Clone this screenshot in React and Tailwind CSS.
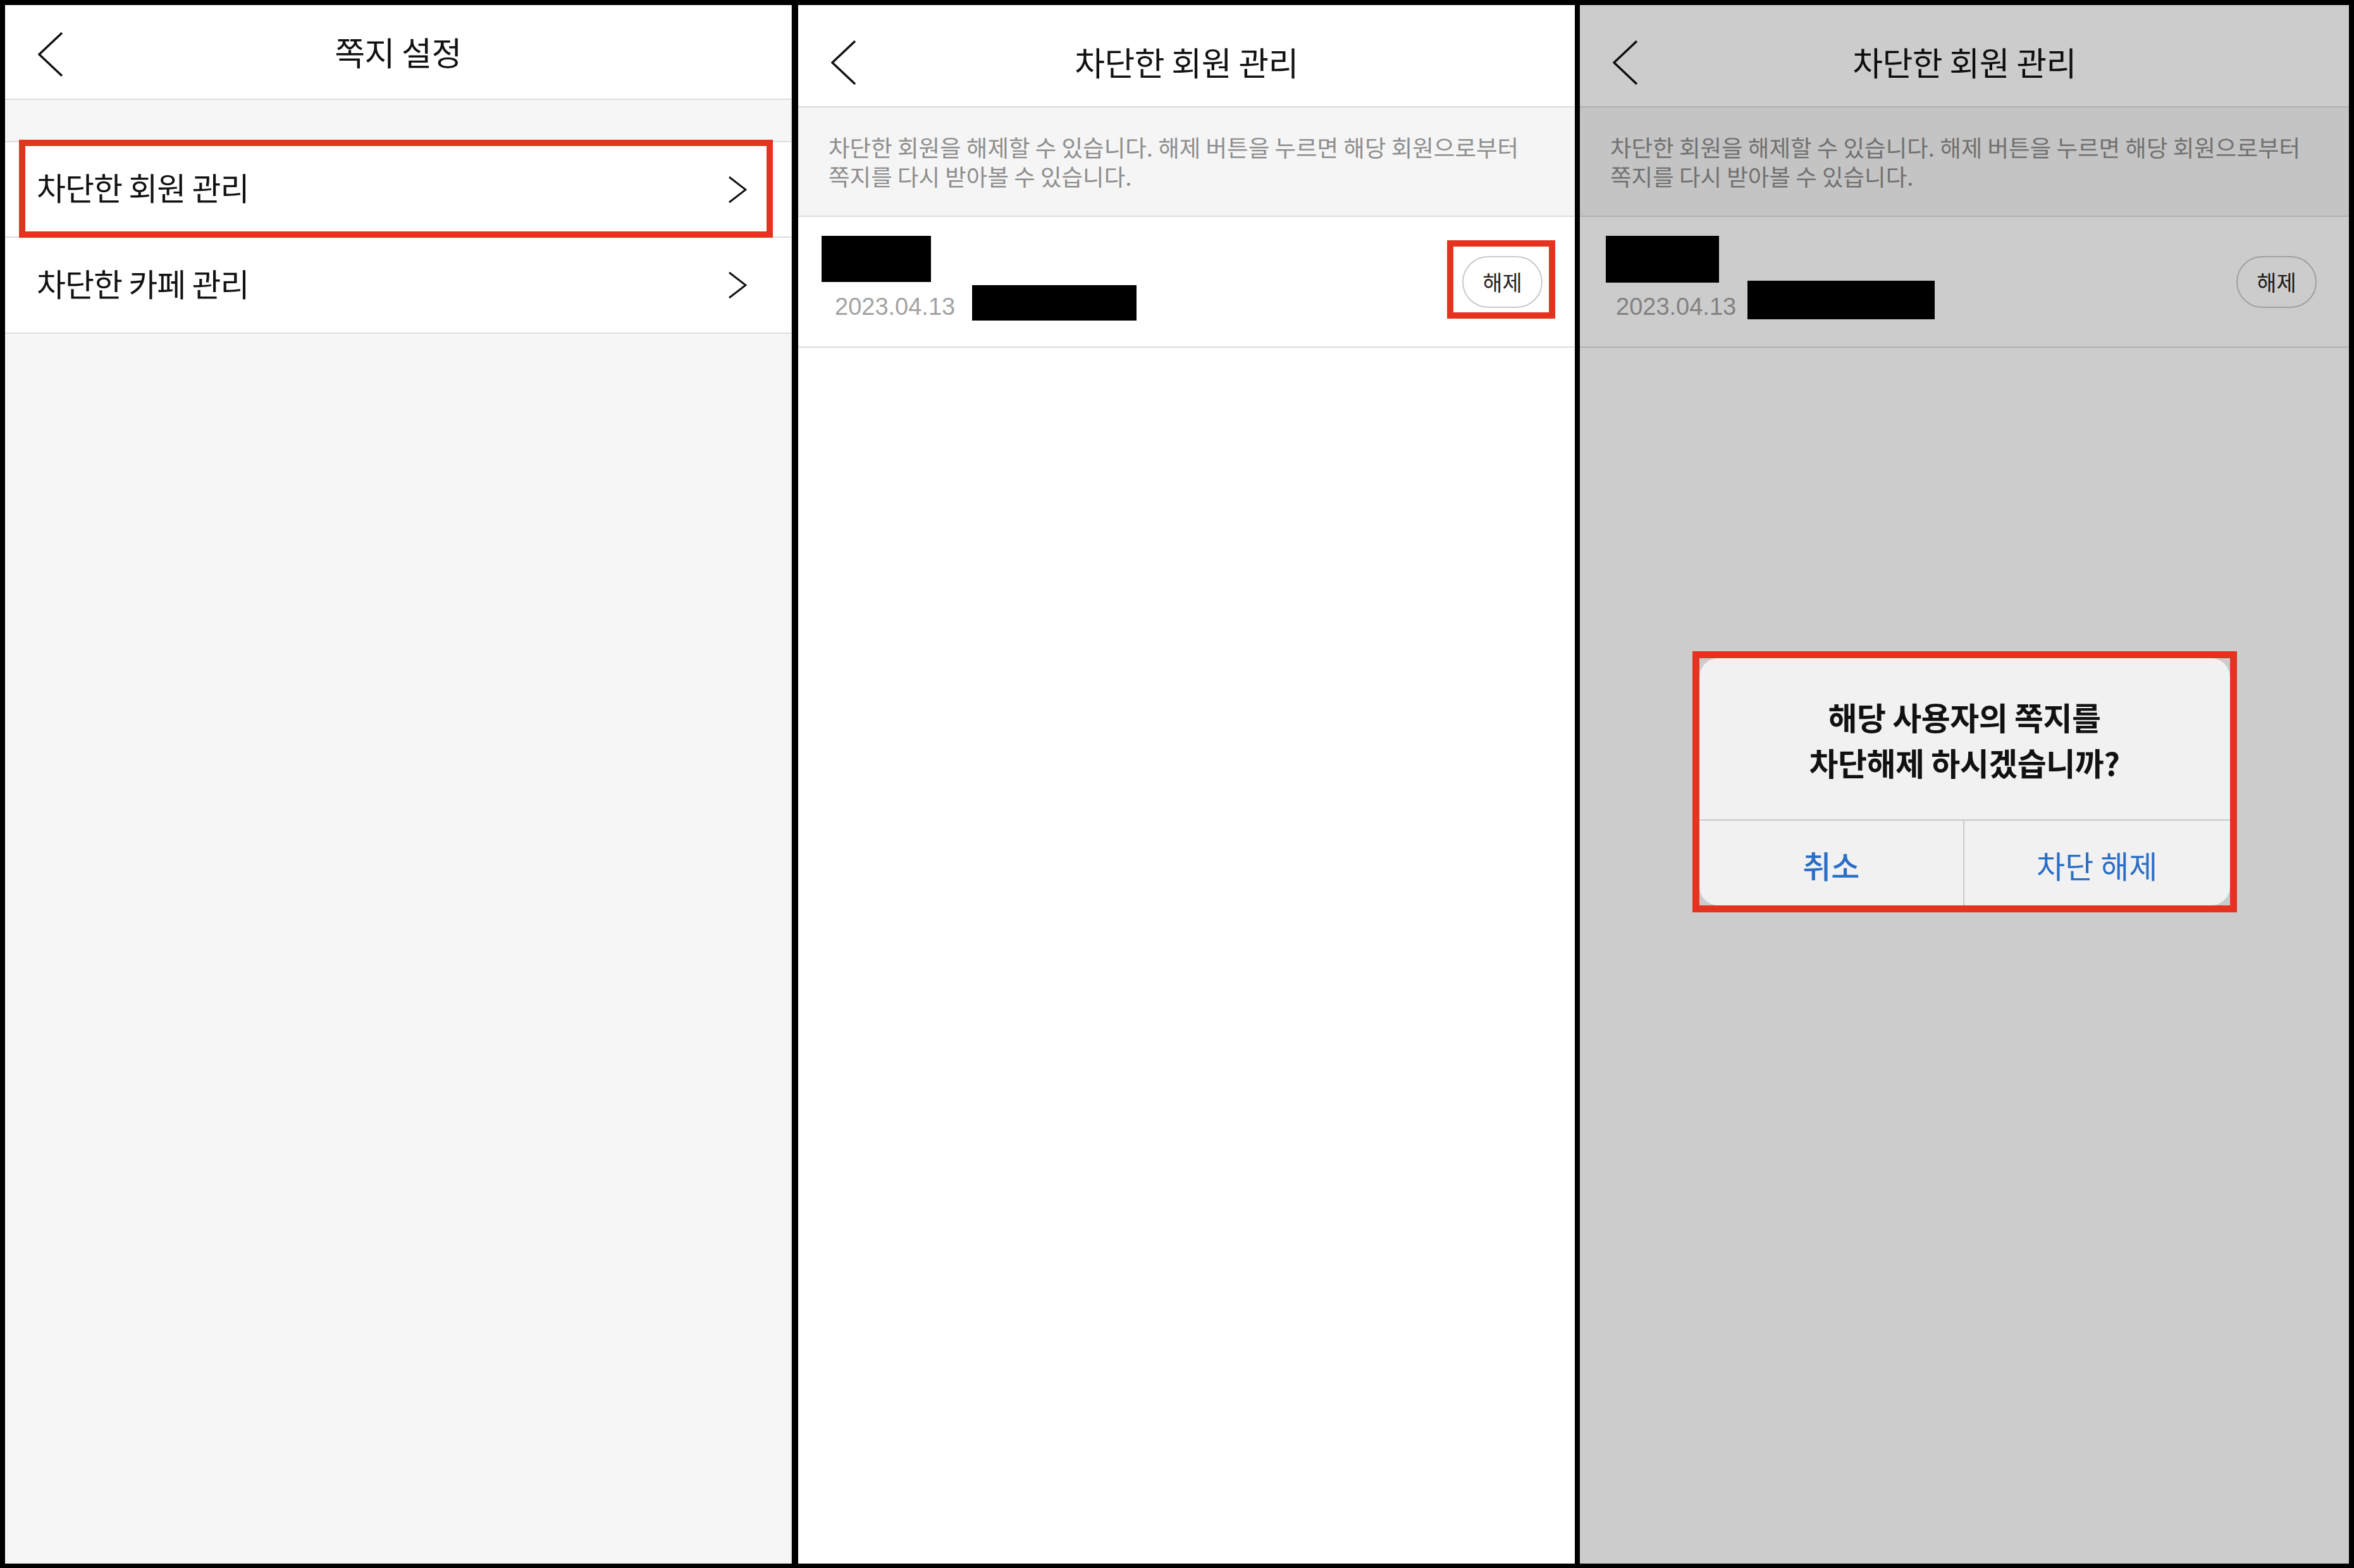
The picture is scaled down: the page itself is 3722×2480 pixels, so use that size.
import React from "react";

const RED = "border-[#e4331e]";

const BackIcon = () => (
    <svg width="40" height="72" viewBox="0 0 40 72" fill="none" stroke="#111" strokeWidth="3.5">
        <polyline points="38,2 2,36 38,70" />
    </svg>
);

const ChevronRight = () => (
    <svg width="30" height="44" viewBox="0 0 30 44" fill="none" stroke="#111" strokeWidth="3">
        <polyline points="2,2 28,22 2,42" />
    </svg>
);

const Header = ({ title, className, iconClass }) => (
    <div className={`grid grid-cols-[1fr_auto_1fr] items-center border-b-2 border-[#dcdcdc] ${className}`}>
        <div className={`flex pl-[52px] ${iconClass}`}>
            <BackIcon />
        </div>
        <h1 className="whitespace-nowrap text-[52px] leading-none tracking-[-0.5px] text-[#111]">{title}</h1>
        <div />
    </div>
);

const MenuRow = ({ label, className }) => (
    <div className={`flex items-center justify-between border-b-2 border-[#dedede] bg-white pl-[50px] pr-[70px] ${className}`}>
        <span className="mb-[9px] text-[50px] leading-none tracking-[-1px] text-[#111]">{label}</span>
        <ChevronRight />
    </div>
);

const MessageSettings = () => (
    <div className="relative flex h-full w-[1244px] flex-col border-r border-[#d4d4d4] bg-[#f6f6f6]">
        <Header title="쪽지 설정" className="h-[150px] bg-white" iconClass="mt-[7px]" />
        <div className="h-[67px] border-b-2 border-[#dedede]" />
        <MenuRow label="차단한 회원 관리" className="h-[151px]" />
        <MenuRow label="차단한 카페 관리" className="h-[152px]" />

        <div className={`absolute left-[22px] top-[213px] h-[155px] w-[1192px] border-[10px] ${RED}`} />
    </div>
);

const BlockedMembers = ({ variant, children }) => (
    <div className={`relative flex h-full flex-col bg-white ${variant.width}`}>
        <Header title="차단한 회원 관리" className="h-[162px] bg-white pt-[19px]" iconClass="mt-[3px]" />

        <div className="h-[173px] border-b-2 border-[#dedede] bg-[#f5f5f5] pl-[48px] pt-[40px] text-[36.5px] leading-[46px] text-[#8e8e8e]">
            <p className="whitespace-nowrap">차단한 회원을 해제할 수 있습니다. 해제 버튼을 누르면 해당 회원으로부터</p>
            <p className="whitespace-nowrap">쪽지를 다시 받아볼 수 있습니다.</p>
        </div>

        <div className="flex h-[207px] items-center justify-between border-b-2 border-[#dedede] pr-[51px]">
            <div className={`flex flex-col self-start pt-[30px] ${variant.pl}`}>
                <div className={`bg-black ${variant.box1}`} />
                <div className={`flex items-start ${variant.dateLine}`}>
                    <span className={`whitespace-nowrap font-['Liberation_Sans',sans-serif] text-[38px] leading-none text-[#a3a3a3] ${variant.date}`}>
                        2023.04.13
                    </span>
                    <div className={`bg-black ${variant.box2}`} />
                </div>
            </div>
            <button className="flex h-[82px] w-[127px] items-center justify-center rounded-full border-2 border-[#c9c9c9] bg-white text-[34px] leading-none text-[#222]">
                해제
            </button>
        </div>

        {children}
    </div>
);

const UnblockDialog = () => (
    <div className="absolute inset-0 flex items-center justify-center bg-black/20 pb-[8px]">
        <div className={`h-[413px] w-[861px] border-[11px] ${RED}`}>
            <div className="flex h-full flex-col overflow-hidden rounded-[30px] bg-[#f1f1f1]">
                <div className="flex h-[257px] items-center justify-center border-b-2 border-[#c8c8c8] text-center text-[50px] font-bold leading-[72px] tracking-[-0.5px] text-[#111]">
                    <p>
                        해당 사용자의 쪽지를
                        <br />
                        차단해제 하시겠습니까?
                    </p>
                </div>
                <div className="grid flex-1 grid-cols-2 text-[49px] leading-none text-[#2a6ec6]">
                    <div className="flex items-center justify-center border-r-2 border-[#c8c8c8] pt-[4px] font-medium">취소</div>
                    <div className="flex items-center justify-center pt-[4px]">차단 해제</div>
                </div>
            </div>
        </div>
    </div>
);

const middle = {
    width: "w-[1228px]",
    pl: "pl-[37px]",
    box1: "h-[73px] w-[173px]",
    dateLine: "mt-[5px]",
    date: "ml-[21px] mt-[15px] w-[217px]",
    box2: "h-[56px] w-[260px]",
};

const right = {
    width: "w-[1216px]",
    pl: "pl-[41px]",
    box1: "h-[74px] w-[179px]",
    dateLine: "-mt-[3px]",
    date: "ml-[16px] mt-[22px] w-[208px]",
    box2: "h-[61px] w-[296px]",
};

export default function App() {
    return (
        <div className="flex h-[2480px] w-[3722px] bg-black pb-[7px] pl-[8px] pr-[8px] pt-[8px] font-['Noto_Sans_CJK_KR','Noto_Sans',sans-serif]">
            <MessageSettings />
            <div className="ml-[10px] h-full">
                <BlockedMembers variant={middle}>
                    <div className={`absolute left-[1026px] top-[372px] h-[124px] w-[171px] border-[10px] ${RED}`} />
                </BlockedMembers>
            </div>
            <div className="ml-[8px] h-full">
                <BlockedMembers variant={right}>
                    <UnblockDialog />
                </BlockedMembers>
            </div>
        </div>
    );
}
